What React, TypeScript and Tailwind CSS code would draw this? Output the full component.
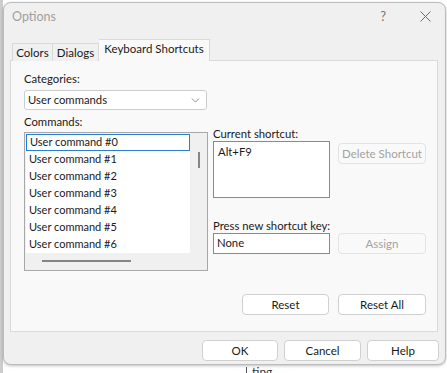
import { ChevronDown } from 'lucide-react';

const font = { fontFamily: 'Lato, "Liberation Sans", sans-serif' };

const commands = [0, 1, 2, 3, 4, 5, 6];

const Btn = ({ label, w, disabled }: { label: string; w: string; disabled?: boolean }) => (
    <div
        className={`${w} h-[21px] flex items-center justify-center rounded-[4px] border text-[11.5px] whitespace-nowrap ${
            disabled ? 'border-[#e3e3e3] bg-[#f9f9f9] text-[#a3a3a3]' : 'border-[#d0d0d0] bg-white text-[#1a1a1a]'
        }`}
    >
        {label}
    </div>
);

const App = () => {
    return (
        <div className="relative w-[447px] h-[373px] bg-white overflow-hidden whitespace-nowrap" style={font}>
            {/* desktop behind the dialog */}
            <div className="absolute left-0 top-0 w-[3px] h-full bg-[#cdcdcd]" />
            <div className="absolute left-[246px] top-[365px] flex items-start gap-[5px] text-[12px] leading-[14px] text-[#333]">
                <div className="w-px h-[10px] bg-[#555] mt-[2px]" />
                <span>ting</span>
            </div>

            <div className="relative ml-[3px] mt-[2px] w-[443px] h-[363px] rounded-[8px] border border-[#bcbcbc] bg-[#f0f0f0] shadow-[0_1px_3px_rgba(0,0,0,0.25)] flex flex-col">
                {/* title bar */}
                <div className="h-[28px] flex items-center pl-[8px] pr-[14px] text-[12.5px] text-[#a0a0a0]">
                    <span className="flex-1">Options</span>
                    <span className="mr-[34px] text-[13px] text-[#777]">?</span>
                    <svg width="11" height="11" viewBox="0 0 11 11" className="mb-[1px]">
                        <path d="M0.5 0.5 L10.5 10.5 M10.5 0.5 L0.5 10.5" stroke="#6b6b6b" strokeWidth="1" />
                    </svg>
                </div>

                {/* tabs */}
                <div className="relative z-10 mt-[8px] ml-[8px] -mb-px flex items-end text-[11.5px] text-[#1a1a1a]">
                    <div className="h-[18px] w-[41px] flex items-center justify-center border border-b-0 border-[#d9d9d9] bg-[#f0f0f0]">Colors</div>
                    <div className="h-[18px] w-[46px] flex items-center justify-center border border-l-0 border-b-0 border-[#d9d9d9] bg-[#f0f0f0]">Dialogs</div>
                    <div className="h-[22px] w-[111px] flex items-center justify-center border border-l-0 border-b-0 border-[#d9d9d9] bg-[#f9f9f9] pb-[3px]">Keyboard Shortcuts</div>
                </div>

                {/* tab panel */}
                <div className="ml-[6px] w-[428px] h-[272px] border border-[#d9d9d9] bg-[#f9f9f9] flex flex-col text-[11.3px] text-[#1a1a1a]">
                    <div className="flex pl-[13px] pt-[10px] gap-[5px]">
                        {/* left column */}
                        <div className="w-[184px] flex flex-col">
                            <div className="leading-[16px]">Categories:</div>
                            <div className="mt-[3px] w-[183px] h-[20px] rounded-[3px] border border-[#cccccc] bg-white flex items-center pl-[3px] pr-[4px]">
                                <span className="flex-1">User commands</span>
                                <ChevronDown size={13} strokeWidth={1.2} color="#555" />
                            </div>
                            <div className="mt-[4px] leading-[16px]">Commands:</div>
                            <div className="mt-[2px] h-[139px] border border-[#a8a8a8] bg-[#f0f0f0] p-px flex flex-col">
                                <div className="flex h-[119px]">
                                    <div className="w-[164px] bg-white flex flex-col text-[11px]">
                                        {commands.map((n) => (
                                            <div
                                                key={n}
                                                className={`h-[17px] flex items-center pl-[3px] ${
                                                    n === 0 ? 'border border-[#2a7fd4] pl-[2px]' : ''
                                                }`}
                                            >
                                                User command #{n}
                                            </div>
                                        ))}
                                    </div>
                                    <div className="flex-1 flex justify-center pt-[18px]">
                                        <div className="w-[2px] h-[16px] bg-[#858585] ml-[1px]" />
                                    </div>
                                </div>
                                <div className="flex-1 flex items-center pl-[16px]">
                                    <div className="w-[89px] h-[2px] bg-[#858585]" />
                                </div>
                            </div>
                        </div>

                        {/* right column */}
                        <div className="flex flex-col pt-[56px]">
                            <div className="leading-[14px]">Current shortcut:</div>
                            <div className="flex items-start gap-[8px]">
                                <div className="w-[117px] h-[57px] border border-[#8a8a8a] bg-white px-[4px] pt-[2px] leading-[16px]">Alt+F9</div>
                                <div className="mt-[2px]">
                                    <Btn label="Delete Shortcut" w="w-[88px]" disabled />
                                </div>
                            </div>
                            <div className="mt-[21px] leading-[14px]">Press new shortcut key:</div>
                            <div className="flex items-start gap-[8px]">
                                <div className="w-[117px] h-[21px] border border-[#8a8a8a] bg-white pl-[3px] flex items-center">None</div>
                                <Btn label="Assign" w="w-[88px]" disabled />
                            </div>
                        </div>
                    </div>

                    <div className="mt-[23px] flex justify-end gap-[9px] pr-[11px]">
                        <Btn label="Reset" w="w-[87px]" />
                        <Btn label="Reset All" w="w-[88px]" />
                    </div>
                </div>

                {/* dialog buttons */}
                <div className="mt-[8px] flex justify-end gap-[6px] pr-[6px]">
                    <Btn label="OK" w="w-[76px]" />
                    <Btn label="Cancel" w="w-[77px]" />
                    <Btn label="Help" w="w-[72px]" />
                </div>
            </div>
        </div>
    );
};

export default App;
